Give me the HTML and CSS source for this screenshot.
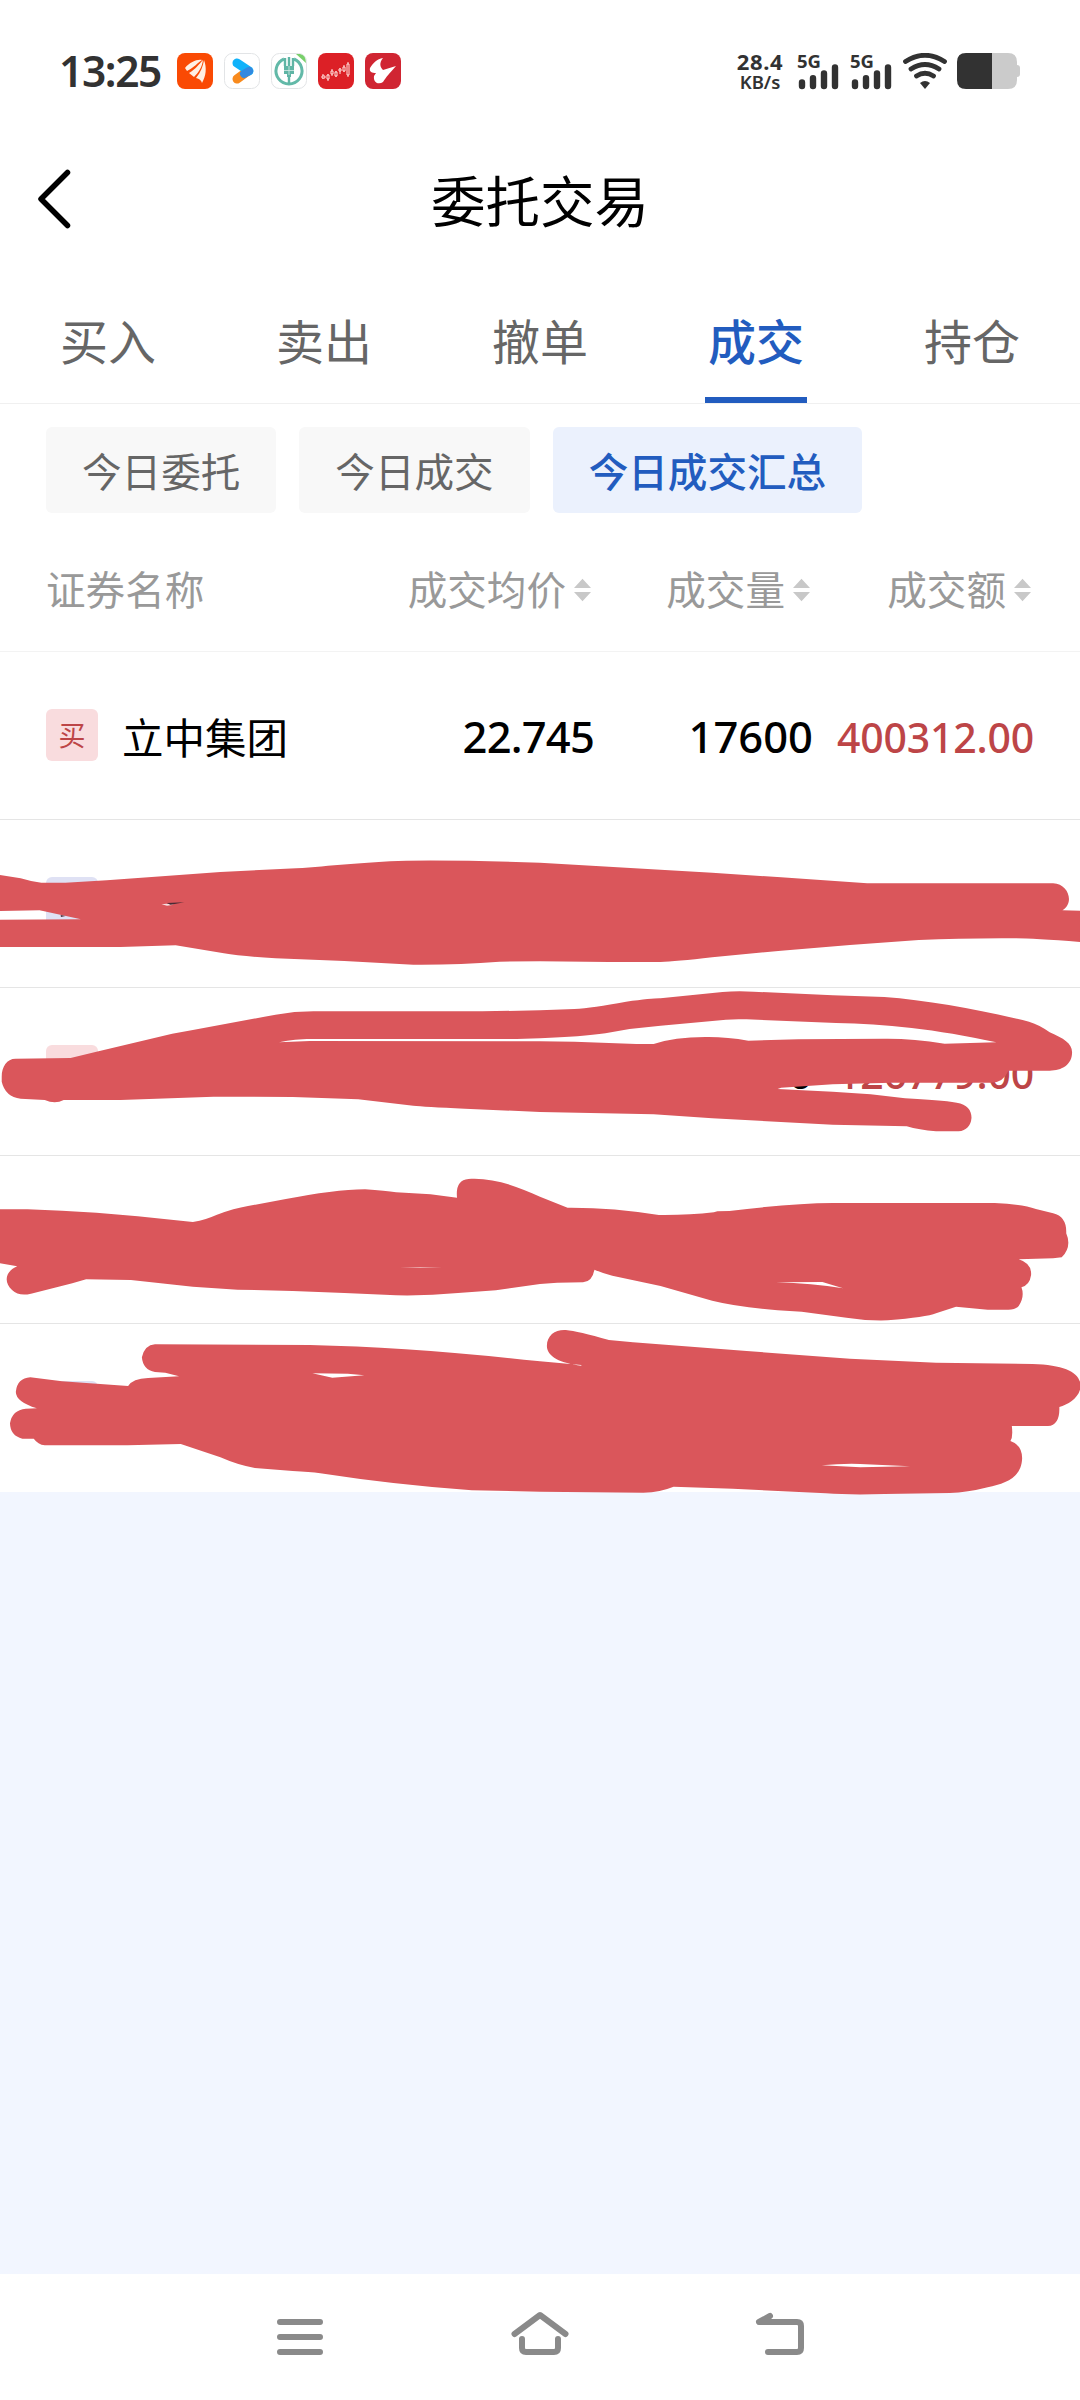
FILE: index.html
```html
<!DOCTYPE html>
<html lang="zh-CN">
<head>
<meta charset="utf-8">
<title>委托交易</title>
<link rel="stylesheet" href="styles.css">
</head>
<body>
<div class="screen">
  <header class="status">
    <span class="clock">13:25</span>
    <div class="apps">
      <svg viewBox="0 0 36 36"><rect width="36" height="36" rx="8" fill="#fa4a04"/><path d="M8 15C13 9 20 6 25 7C20 10 18 14 10 18ZM12 20C19 16 22 11 26 7C25 14 22 19 17 24ZM19 25C24 19 26 13 27 7C30 15 29 23 25 30Q24 26 19 25Z" fill="#fff0e4"/></svg>
      <svg viewBox="0 0 36 36"><rect x=".5" y=".5" width="35" height="35" rx="8" fill="#fff" stroke="#e2e4e6"/><path d="M13 26L24 18" stroke="#f88a1d" stroke-width="9" stroke-linecap="round"/><path d="M13 10L25 18" stroke="#10b2fa" stroke-width="9" stroke-linecap="round"/><path d="M20 21L25 18" stroke="#3289e0" stroke-width="8" stroke-linecap="round"/></svg>
      <svg viewBox="0 0 36 36"><rect x=".5" y=".5" width="35" height="35" rx="8" fill="#fff" stroke="#e2e4e6"/><path d="M25 1H29Q35 2 35 10Z" fill="#78cf6a"/><path d="M13 6A13 13 0 1 0 23 6" fill="none" stroke="#62b9a8" stroke-width="3"/><path d="M14 5V13M22 5V13M18 4V31" fill="none" stroke="#5fb5a5" stroke-width="2.400"/><path d="M13 13H23V21H20V24H16V21H13Z" fill="#5fb5a5"/><path d="M13 17.500H23M18 13V22" stroke="#d5ece7" stroke-width=".8"/></svg>
      <svg viewBox="0 0 36 36"><rect width="36" height="36" rx="8" fill="#dc2026"/><path d="M5 21V26M10 21V28M14 16V23M18 18V24M22 15V21M26 12V19M30 9V24" stroke="#ffe3df" stroke-width="1"/><path d="M4 23H7V25H4ZM9 22H11V26H9ZM13 18H15V21H13ZM17 19H19V23H17ZM21 16H23V18H21ZM25 14H27V18H25ZM29 11H31V22H29Z" fill="#dc2026" stroke="#ffe3df"/></svg>
      <svg viewBox="0 0 36 36"><rect width="36" height="36" rx="8" fill="#d02532"/><path d="M18 5C14 10 15 14 18 17L31 13C25 20 21 24 18 29C14 32 8 30 9 23L11 20C7 20 4 19 5 15C8 10 12 6 18 5Z" fill="#fff"/></svg>
    </div>
    <div class="speed"><span class="rate">28.4</span><span class="unit">KB/s</span></div>
    <svg class="signal" viewBox="0 0 44 40"><text x="0" y="17">5G</text><path d="M5 31.500V35M16 27.200V35M27 22.500V35M38 16.500V35" stroke="#323232" stroke-width="6.400" stroke-linecap="round"/></svg>
    <svg class="signal" viewBox="0 0 44 40"><text x="0" y="17">5G</text><path d="M5 31.500V35M16 27.200V35M27 22.500V35M38 16.500V35" stroke="#323232" stroke-width="6.400" stroke-linecap="round"/></svg>
    <svg class="wifi" viewBox="0 0 44 36"><path d="M2.500 8.500Q22-4 41.500 8.500M8 16Q22 7 36 16M13.500 23Q22 17.500 30.500 23" fill="none" stroke="#323232" stroke-width="4.800" stroke-linecap="round"/><path d="M17 30Q22 26 27 30L22 36Z" fill="#323232"/></svg>
    <svg class="battery" viewBox="0 0 63 36"><path d="M34 0H51Q60 0 60 9V12Q63 12 63 15V21Q63 24 60 24V27Q60 36 51 36H34Z" fill="#cbcbcb"/><path d="M9 0H35V36H9Q0 36 0 27V9Q0 0 9 0Z" fill="#323232"/></svg>
  </header>

  <div class="titlebar">
    <svg class="back" viewBox="0 0 34 60"><path d="M30.500 3.500L4 30L30.500 56.500" fill="none" stroke="#000" stroke-width="5.500" stroke-linecap="round" stroke-linejoin="round"/></svg>
    <h1>委托交易</h1>
  </div>

  <nav class="tabs">
    <a>买入</a><a>卖出</a><a>撤单</a><a class="on">成交</a><a>持仓</a>
  </nav>

  <div class="chips">
    <span>今日委托</span><span>今日成交</span><span class="on">今日成交汇总</span>
  </div>

  <div class="grid head">
    <span>证券名称</span>
    <span class="r">成交均价<svg class="sort" viewBox="0 0 18 24"><path d="M9 0L18 10H0ZM0 14H18L9 24Z"/></svg></span>
    <span class="r">成交量<svg class="sort" viewBox="0 0 18 24"><path d="M9 0L18 10H0ZM0 14H18L9 24Z"/></svg></span>
    <span class="r">成交额<svg class="sort" viewBox="0 0 18 24"><path d="M9 0L18 10H0ZM0 14H18L9 24Z"/></svg></span>
  </div>

  <main class="list">
    <div class="grid row"><span class="stock"><i class="badge buy">买</i>立中集团</span><span class="num price r">22.745</span><span class="num r">17600</span><span class="num amount r">400312.00</span></div>
    <div class="grid row"><span class="stock"><i class="badge sell"></i></span></div>
    <div class="grid row"><span class="stock"><i class="badge buy"></i></span><span></span><span class="num r">0</span><span class="num amount r">126779.00</span></div>
    <div class="grid row"><span class="stock"><i class="badge sell"></i></span></div>
    <div class="grid row"><span class="stock"><i class="badge sell"></i></span></div>

    <svg class="ink ink-a" viewBox="0 0 3136 1020" preserveAspectRatio="none">
      <path d="M0 165L60 175Q90 185 120 188L190 188L310 181Q480 168 640 156L860 145C960 138 1050 126 1180 122Q1350 120 1568 128L1768 140L2068 158L2268 172L2518 190H3058C3104 192 3120 250 3085 271L3136 272V366Q3000 355 2950 355Q2800 354 2668 360L2468 375L2268 392L2068 412Q1960 425 1918 426H1768L1568 424L1450 425Q1330 435 1200 434L1000 423L800 415Q700 409 650 400L510 376L350 381H0V299L235 298L115 271L0 273Z"/>
      <path class="light" d="M469 253L484 251L505 254L485 257Z"/><path class="dark" d="M484 249L535 247L495 254Z"/><path class="dark" d="M176 285L190 288L177 291Z"/>
      <path d="M5 770C5 740 20 716 45 716L205 714L280 695L500 641L560 630L800 584Q860 573 920 574H1400L1568 571L1668 567Q1720 564 1818 545Q1900 534 1918 535L2098 516Q2140 512 2188 515L2418 526L2568 531C2698 540 2868 575 2988 605Q3020 615 3048 637C3088 655 3113 670 3113 697C3113 735 3083 752 3048 752H2928Q2913 788 2878 788H2588L2418 793L2268 803L2258 807L2418 815L2528 823L2628 835Q2728 840 2778 848C2808 853 2821 870 2821 893Q2818 930 2783 934H2718Q2668 930 2633 919L2418 914L2068 895L1898 883L1568 876L1350 866Q1230 860 1200 857L1040 838L850 831L620 830L350 840H185Q160 854 130 840L60 836Q15 830 5 785ZM810 667C850 658 880 656 920 657H1500L1568 655Q1690 650 1758 640L1828 627L1918 617L2108 599Q2130 597 2168 598L2428 609C2568 612 2718 627 2893 667L2743 671Q2648 655 2568 656L2318 658L2173 662Q2108 650 2048 651Q1958 651 1898 672H1848L1668 665L1568 664L900 663Z"/>
    </svg>
    <svg class="ink ink-b" viewBox="0 0 3136 1080" preserveAspectRatio="none">
      <path d="M0 178H80L180 182L280 188L400 199L560 216Q600 208 630 194Q680 175 720 168L830 147C920 130 1000 118 1060 118Q1120 123 1150 127L1250 133L1327 143Q1322 90 1360 87C1430 82 1500 108 1568 140L1648 173Q1778 172 1913 195Q1998 196 2073 187L2083 184L2118 183Q2298 160 2418 159H2888Q2968 162 3008 177L3058 190Q3098 200 3096 250Q3113 290 3083 322L3058 325L2958 328Q2996 340 2994 375Q2990 405 2966 412Q2976 440 2958 468Q2948 479 2928 479H2868L2776 470L2718 490Q2690 502 2578 511Q2518 513 2458 503L2328 485L2258 481Q2138 470 2068 452L1918 408L1778 377Q1750 370 1726 359Q1720 395 1693 397L1618 398L1568 402L1440 421L1330 429Q1240 438 1150 436L1000 429L850 423L690 419L560 410L380 390L250 388L210 400L90 431Q55 440 35 420C10 395 15 365 50 349L0 340ZM2253 397L2388 396L2448 415Q2358 400 2253 397ZM1160 352H1285L1220 353Z"/>
      <path d="M450 583L900 585Q1200 592 1568 634L1688 645L1688 647C1628 640 1588 620 1588 588C1588 555 1613 538 1643 540Q1678 543 1768 570L1838 577L2168 603L2468 626L2718 638L2998 642C3098 645 3138 670 3138 710C3133 745 3103 762 3076 771Q3078 825 3043 828H2938Q2942 860 2934 873Q2968 885 2968 925C2966 985 2918 1000 2868 1012Q2808 1028 2758 1029L2568 1032Q2468 1035 2398 1030L2128 1016L1956 1010Q1918 1026 1868 1028L1568 1025L1370 1021Q1150 1005 930 970Q900 965 850 963L740 954Q690 945 640 922L525 882L370 886H130Q110 883 98 866H65Q30 858 29 820Q35 780 75 776L107 775Q45 755 46 725Q50 685 88 682L180 694L372 708Q385 686 430 684L520 679L480 668L450 666Q415 660 412 622Q420 585 450 583ZM907 670L1010 671L1058 676L965 683ZM2386 946Q2448 940 2498 942L2643 949L2498 952Z"/>
    </svg>
  </main>

  <div class="empty"></div>

  <footer class="sysnav">
    <svg viewBox="0 0 60 50"><path d="M10 12H50M10 27H50M10 42H50"/></svg>
    <svg viewBox="0 0 60 50"><path d="M4.500 24L30 5L55.500 24M12 29V38Q12 42 16 42H44Q48 42 48 38V29"/></svg>
    <svg viewBox="0 0 60 50"><path d="M20 6L9 12H47Q51 12 51 16V38Q51 42 47 42H18"/></svg>
  </footer>
</div>
</body>
</html>
```

FILE: styles.css
```css
* { box-sizing: border-box; }
body {
  margin: 0;
  background: #fff;
  font-family: "Noto Sans CJK SC", "Noto Sans", sans-serif;
  color: #000;
}
svg { display: block; flex: none; }
.screen {
  width: 1080px;
  height: 2400px;
  display: flex;
  flex-direction: column;
  overflow: hidden;
}

.status {
  height: 142px;
  padding: 0 60px 0 59px;
  display: flex;
  align-items: center;
  color: #323232;
}
.clock {
  width: 118px;
  font: 600 42.5px/50px "Noto Sans", sans-serif;
  letter-spacing: -1.4px;
}
.apps { display: flex; gap: 11px; }
.apps svg { width: 36px; height: 36px; }
.speed {
  width: 52px;
  margin-left: 333px;
  display: flex;
  flex-direction: column;
  align-items: center;
  font-family: "Noto Sans", sans-serif;
  font-weight: 700;
}
.rate { font-size: 22px; line-height: 21px; letter-spacing: .6px; }
.unit { font-size: 18.5px; line-height: 20px; font-weight: 600; }
.signal { width: 44px; height: 40px; margin: 0 0 0 11px; overflow: visible; }
.signal + .signal { margin-left: 9px; }
.signal text { font: 700 18.5px "Noto Sans", sans-serif; fill: #323232; }
.wifi { width: 44px; height: 36px; margin-left: 9px; }
.battery { width: 63px; height: 36px; margin-left: 10px; }

.titlebar {
  height: 113px;
  padding: 0 37px;
  display: grid;
  grid-template-columns: 34px 1fr 34px;
  align-items: center;
}
.back { width: 34px; height: 60px; }
.titlebar h1 {
  margin: 0;
  text-align: center;
  font-size: 54.5px;
  font-weight: 400;
  line-height: 80px;
}

.tabs {
  height: 149px;
  display: grid;
  grid-template-columns: repeat(5, 1fr);
  justify-items: center;
  border-bottom: 1px solid #f0f0f0;
}
.tabs a {
  width: 102px;
  padding-top: 49px;
  text-align: center;
  font-size: 48px;
  line-height: 70px;
  color: #666;
}
.tabs .on { color: #225cbf; font-weight: 500; border-bottom: 6px solid #225cbf; }

.chips { display: flex; gap: 23px; padding: 23px 46px 0; }
.chips span {
  height: 86px;
  padding: 0 36px;
  border-radius: 6px;
  background: #f8f8f8;
  color: #666;
  font-size: 39.6px;
  line-height: 86px;
}
.chips .on { background: #ebf1fd; color: #225cbf; font-weight: 500; }

.grid {
  display: grid;
  grid-template-columns: 320px 228px 219px 221px;
  padding: 0 46px;
  align-items: center;
}
.r { justify-self: end; }
.head {
  height: 139px;
  padding-top: 12px;
  border-bottom: 1px solid #f3f3f3;
  font-size: 39.6px;
  line-height: 56px;
  color: #999;
}
.head .r { display: flex; align-items: center; gap: 8px; margin-right: 3px; }
.sort { width: 17px; height: 24px; margin-top: 3px; fill: #c8c8c8; }

.list { position: relative; }
.row { height: 168px; border-bottom: 1px solid #e5e5e5; }
.row:nth-child(5) { border-bottom: 0; }
.stock { display: flex; align-items: center; gap: 24px; font-size: 41.5px; line-height: 60px; }
.badge {
  width: 52px;
  height: 52px;
  margin-top: -2px;
  border-radius: 6px;
  font-size: 27px;
  line-height: 52px;
  font-style: normal;
  text-align: center;
}
.buy { background: #f9dcde; color: #bd4547; }
.sell { background: #dfe1f4; }
.num {
  font-family: "Noto Sans", sans-serif;
  font-size: 43.5px;
  line-height: 60px;
  font-weight: 500;
}
.price { letter-spacing: -.8px; }
.amount { font-size: 41px; letter-spacing: -.2px; color: #bd4547; padding-top: 2px; }

/* Marker strokes drawn over the rows */
.ink { position: absolute; left: 0; width: 1080px; fill: #da565b; fill-rule: evenodd; }
.ink-a { top: 168px; height: 340px; }
.ink-b { top: 498px; height: 360px; }
.ink .dark { fill: #4b2a34; }
.ink .light { fill: #f7dfe1; }

.empty { flex: 1; background: #f2f6ff; }
.sysnav {
  height: 126px;
  padding: 36px 270px 0;
  display: flex;
  justify-content: space-between;
}
.sysnav svg {
  width: 60px;
  height: 50px;
  fill: none;
  stroke: #8a8a8a;
  stroke-width: 6;
  stroke-linecap: round;
  stroke-linejoin: round;
}
```
